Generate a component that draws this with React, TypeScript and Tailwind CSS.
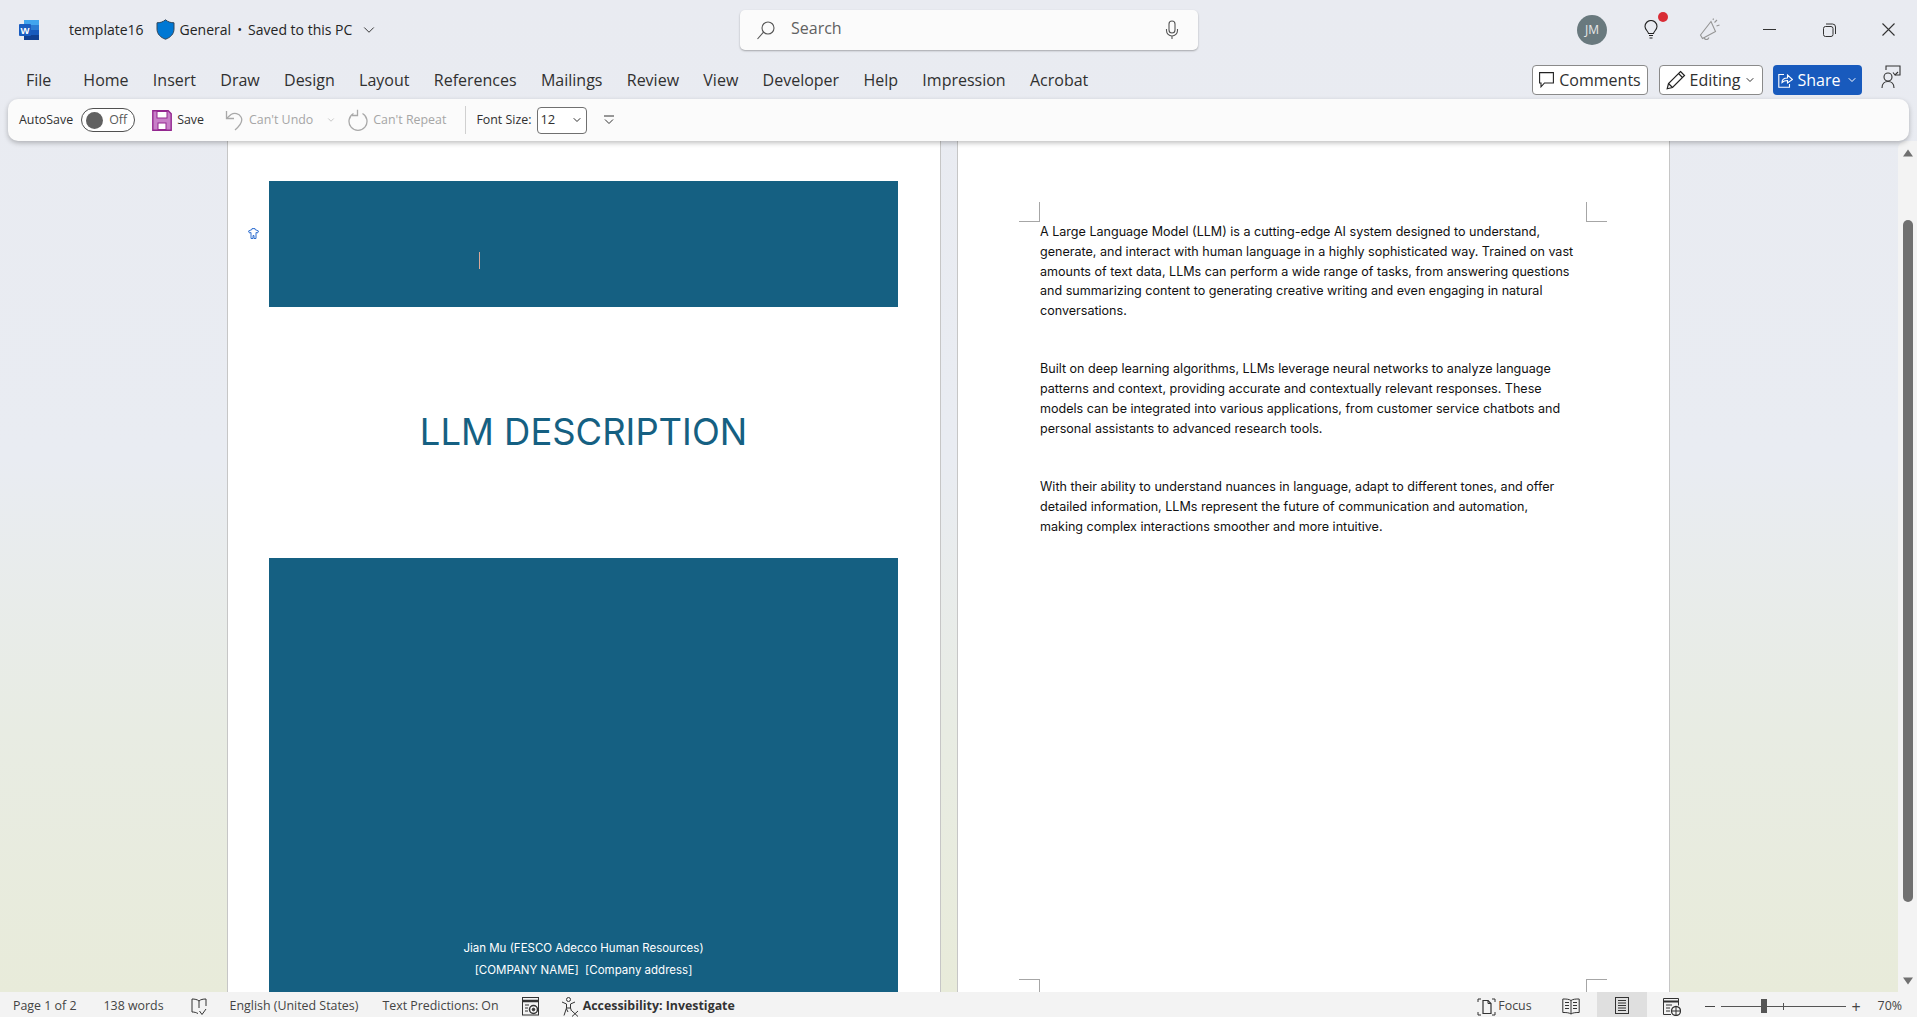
import { ChevronDown } from "lucide-react";

const tabs = ["Home", "Insert", "Draw", "Design", "Layout", "References", "Mailings", "Review", "View", "Developer", "Help", "Impression", "Acrobat"];

const paragraphs = [
  [
    "A Large Language Model (LLM) is a cutting-edge AI system designed to understand,",
    "generate, and interact with human language in a highly sophisticated way. Trained on vast",
    "amounts of text data, LLMs can perform a wide range of tasks, from answering questions",
    "and summarizing content to generating creative writing and even engaging in natural",
    "conversations.",
  ],
  [
    "Built on deep learning algorithms, LLMs leverage neural networks to analyze language",
    "patterns and context, providing accurate and contextually relevant responses. These",
    "models can be integrated into various applications, from customer service chatbots and",
    "personal assistants to advanced research tools.",
  ],
  [
    "With their ability to understand nuances in language, adapt to different tones, and offer",
    "detailed information, LLMs represent the future of communication and automation,",
    "making complex interactions smoother and more intuitive.",
  ],
];

function WordLogo() {
  return (
    <svg width="20" height="20" viewBox="0 0 20 20">
      <rect x="5" y="0" width="15" height="20" rx="1" fill="#2b7cd3" />
      <rect x="5" y="0" width="15" height="5" fill="#41a5ee" />
      <rect x="5" y="10" width="15" height="5" fill="#185abd" />
      <rect x="5" y="15" width="15" height="5" fill="#103f91" />
      <rect x="0" y="4" width="12" height="12" rx="1" fill="#1a5dc0" />
      <text x="6" y="13.5" textAnchor="middle" fontSize="9.5" fontWeight="700" fill="#fff" fontFamily="Liberation Sans, sans-serif">W</text>
    </svg>
  );
}

function Shield() {
  return (
    <svg width="19" height="21" viewBox="0 0 19 21">
      <path d="M9.5 0.8C7 3 4 3.8 1 3.8V10c0 5 3.5 8.5 8.5 10.2C14.500 18.500 18 15 18 10V3.800C15 3.800 12 3 9.500 0.800Z" fill="#0078d4" stroke="#33475b" strokeWidth="1" />
    </svg>
  );
}

function Lens() {
  return (
    <svg width="20" height="20" viewBox="0 0 20 20" fill="none" stroke="#555" strokeWidth="1.1">
      <circle cx="12" cy="8" r="6" />
      <path d="M7.500 12.200 1.500 19" />
    </svg>
  );
}

function Mic() {
  return (
    <svg width="14" height="20" viewBox="0 0 14 20" fill="none" stroke="#555" strokeWidth="1.1">
      <rect x="4" y="1" width="6" height="12" rx="3" />
      <path d="M1.500 9v1.500a5.500 5.500 0 0 0 11 0V9M7 16v3" />
    </svg>
  );
}

function Bulb() {
  return (
    <svg width="14" height="20" viewBox="0 0 14 20" fill="none" stroke="#222" strokeWidth="1.100">
      <path d="M4.500 13.500C4.200 11 1 10 1 6.500a6 6 0 0 1 12 0c0 3.500-3.200 4.500-3.500 7Z" />
      <path d="M5 15.500h4M5.500 18h3" />
    </svg>
  );
}

function Megaphone() {
  return (
    <svg width="22" height="24" viewBox="0 0 22 24" fill="none" stroke="#959595" strokeWidth="1.100">
      <path d="M1.500 17 12 3.500l4.500 10L3.500 20.500Z" />
      <path d="M5 19.500c.5 2 2.500 2.500 4 1.500l1-1.500" />
      <path d="M15.500 4.500 18 2M17.500 8l3-1M14 2l.5-1.500" />
    </svg>
  );
}

function Comment() {
  return (
    <svg width="15" height="16" viewBox="0 0 15 16" fill="none" stroke="#222" strokeWidth="1.100">
      <path d="M.6 .6h13.800v10.400H5.500L2 14.800V11H.6Z" />
    </svg>
  );
}

function Pencil() {
  return (
    <svg width="20" height="20" viewBox="0 0 20 20" fill="none" stroke="#222" strokeWidth="1.200">
      <path d="M14.500 1.500 18.500 5.500 6.500 17.500 1.200 18.800 2.500 13.500Z" />
      <path d="M12.500 3.500l4 4M2.500 13.500l4 4" />
    </svg>
  );
}

function ShareIcon() {
  return (
    <svg width="15" height="16" viewBox="0 0 15 16" fill="none" stroke="#fff" strokeWidth="1.100">
      <path d="M4 10.500C4 7.500 6 6 9.500 6V3l5 4.500-5 3.500V8.500C7 8.500 5.500 9 4 10.500Z" />
      <path d="M6 2.500H.8v12.800h10.700V12" />
    </svg>
  );
}

function Present() {
  return (
    <svg width="20" height="24" viewBox="0 0 20 24" fill="none" stroke="#333" strokeWidth="1.100">
      <path d="M5 5V1h14v9h-5" />
      <path d="M12 7.500l2 2.500 3-3" />
      <circle cx="7" cy="12" r="4" />
      <path d="M1 23c0-4 2.500-6.500 6-6.500s6 2.500 6 6.500" />
    </svg>
  );
}

function SaveIcon() {
  return (
    <svg width="20" height="21" viewBox="0 0 20 21">
      <path d="M.8 .8h15.400L19.200 3.800V20.200H.8Z" fill="#c880c8" stroke="#93278f" strokeWidth="1.400" />
      <rect x="5" y="1.500" width="10" height="6.500" fill="#fff" stroke="#93278f" />
      <rect x="6" y="13" width="8" height="6.500" fill="#fff" stroke="#93278f" />
    </svg>
  );
}

function UndoIcon() {
  return (
    <svg width="19" height="22" viewBox="0 0 19 22" fill="none" stroke="#a9a9a9" strokeWidth="1.300">
      <path d="M1.500 2v7.500H9" />
      <path d="M1.500 9.500 6 5.500c3.500-2 8-1 10 2.500 2 3.500.5 7.500-6 13" />
    </svg>
  );
}

function RedoIcon() {
  return (
    <svg width="20" height="23" viewBox="0 0 20 23" fill="none" stroke="#a9a9a9" strokeWidth="1.300">
      <path d="M5.500 4.500a9 9 0 1 0 9 0" />
      <path d="M9.500 .8v5.700H4" />
    </svg>
  );
}

function OverflowIcon() {
  return (
    <svg width="10" height="10" viewBox="0 0 10 10" fill="none" stroke="#333" strokeWidth="1">
      <path d="M0 1h10M1 4.500 5 8.500l4-4" />
    </svg>
  );
}

function BookCheck() {
  return (
    <svg width="16" height="18" viewBox="0 0 16 18" fill="none" stroke="#333" strokeWidth="1">
      <path d="M8 3C6.500 1.500 3.500 1 1 1v13c2.500 0 4 .5 6 1.500M8 3c1.500-1.500 4-2 7-2v7M8 3v7" />
      <path d="M8.500 13l2.500 3.500 4-5.500" />
    </svg>
  );
}

function MacroIcon() {
  return (
    <svg width="18" height="19" viewBox="0 0 18 19" fill="none" stroke="#333" strokeWidth="1">
      <rect x=".5" y=".5" width="16" height="17.500" />
      <path d="M.5 4h16" strokeWidth="2.500" />
      <path d="M3 8h4M3 11h3M3 14h3" />
      <circle cx="11.500" cy="12.500" r="4" strokeWidth="1.500" />
      <circle cx="11.500" cy="12.500" r="1.300" fill="#333" />
    </svg>
  );
}

function AccessIcon() {
  return (
    <svg width="18" height="20" viewBox="0 0 18 20" fill="none" stroke="#333" strokeWidth="1">
      <circle cx="7.500" cy="2.500" r="2" />
      <path d="M1 5l4.500 2v4L3 18.500M14 5 9.500 7v4l1 3M5.500 11h4M5.500 12 7 15" />
      <path d="M11 14l6 5.500M17 14l-6 5.500" />
    </svg>
  );
}

function FocusIcon() {
  return (
    <svg width="19" height="18" viewBox="0 0 19 18" fill="none" stroke="#333" strokeWidth="1">
      <path d="M1 4V1h3M15 1h3v3M1 14v3h3M15 17h3v-3" />
      <path d="M6 15.500V2.500h5l3 3v10Z" strokeWidth="1.200" />
      <path d="M11 2.500v3h3" />
    </svg>
  );
}

function ReadIcon() {
  return (
    <svg width="18" height="17" viewBox="0 0 18 17" fill="none" stroke="#333" strokeWidth="1">
      <path d="M9 2.500C7 1 4 1 .8 1v13.500c3.200 0 6 0 8.200 1.500 2.200-1.500 5-1.500 8.200-1.500V1C14 1 11 1 9 2.500V16" />
      <path d="M3 4.500h4M3 7.500h4M3 10.500h4M11 4.500h4M11 7.500h4M11 10.500h4" />
    </svg>
  );
}

function PrintIcon() {
  return (
    <svg width="14" height="17" viewBox="0 0 14 17" fill="none" stroke="#333" strokeWidth="1">
      <rect x=".5" y=".5" width="13" height="16" />
      <path d="M3 3.500h8M3 6h8M3 8.500h8M3 11h8M3 13.500h8" />
    </svg>
  );
}

function WebIcon() {
  return (
    <svg width="18" height="18" viewBox="0 0 18 18" fill="none" stroke="#333" strokeWidth="1">
      <path d="M8 16.500H.5V.5h15v7" />
      <path d="M.5 3.500h15" strokeWidth="2" />
      <path d="M3 7h6M3 10h4M3 13h4" />
      <circle cx="13" cy="13" r="4.500" fill="#f3f3f3" strokeWidth="1.300" />
      <path d="M8.500 13h9M13 8.500v9" />
    </svg>
  );
}

function AnchorMark() {
  return (
    <svg width="11" height="11" viewBox="0 0 11 11" fill="none" stroke="#2f6fd0" strokeWidth="1">
      <path d="M.5 3 4 1.500V.6h3v.9L10.500 3 9.500 5 8 4.500v6H6V7.500H5v3H3v-6L1.500 5Z" />
    </svg>
  );
}

function Triangle({ down }: { down?: boolean }) {
  return (
    <svg width="10" height="8" viewBox="0 0 10 8" fill="#707070">
      <path d={down ? "M0 .5h10L5 7.500Z" : "M0 7.500h10L5 .5Z"} />
    </svg>
  );
}

function CropMark({ className }: { className: string }) {
  return <div className={`absolute h-[20px] w-[21px] border-[#a6a6a6] ${className}`} />;
}

function TitleBar() {
  return (
    <div className="flex h-[60px] shrink-0 items-center pb-[1px]">
      <div className="flex w-[740px] items-center text-[14px] text-[#242424]">
        <div className="ml-[19px] mr-[30px]"><WordLogo /></div>
        <span>template16</span>
        <div className="ml-[12px] mr-[5px]"><Shield /></div>
        <span>General</span>
        <span className="w-[17px] text-center text-[13px]">•</span>
        <span>Saved to this PC</span>
        <ChevronDown className="ml-[8px] h-[18px] w-[18px]" strokeWidth={1.2} />
      </div>
      <div className="flex h-[40px] w-[458px] items-center rounded-[5px] bg-[#fbfbfb] pl-[16px] pr-[19px] shadow-[0_1px_2px_rgba(0,0,0,0.3)]">
        <Lens />
        <span className="mb-[4px] ml-[15px] flex-1 text-[16px] text-[#616161]">Search</span>
        <Mic />
      </div>
      <div className="flex flex-1 items-center justify-end">
        <div className="flex w-[58px] justify-center">
          <div className="flex h-[30px] w-[30px] items-center justify-center rounded-full bg-[#69797e] text-[12px] text-[#e8e8e8]">JM</div>
        </div>
        <div className="relative flex w-[60px] justify-center">
          <Bulb />
          <div className="absolute left-[37px] top-[-8px] h-[10px] w-[10px] rounded-full bg-[#d92c35]" />
        </div>
        <div className="flex w-[58px] justify-center"><Megaphone /></div>
        <div className="flex w-[60px] justify-center">
          <div className="h-[1px] w-[13px] bg-[#333]" />
        </div>
        <div className="flex w-[60px] justify-center">
          <svg width="13" height="14" viewBox="0 0 13 14" fill="none" stroke="#333" strokeWidth="1">
            <rect x=".5" y="3.500" width="9.500" height="10" rx="2" />
            <path d="M3 1h6.500A3 3 0 0 1 12.500 4v7" />
          </svg>
        </div>
        <div className="flex w-[58px] justify-center">
          <svg width="13" height="13" viewBox="0 0 13 13" fill="none" stroke="#333" strokeWidth="1.100">
            <path d="M.5 .5l12 12M12.500 .5l-12 12" />
          </svg>
        </div>
      </div>
    </div>
  );
}

function TabRow() {
  return (
    <div className="flex h-[39px] shrink-0 items-center pl-[26px] text-[16px] text-[#303030]">
      <span className="mr-[32px] mt-[1px]">File</span>
      <div className="mt-[1px] flex gap-[24.300px]">
        {tabs.map((t) => (
          <span key={t}>{t}</span>
        ))}
      </div>
      <div className="ml-auto flex items-center pr-[55px]">
        <div className="flex h-[30px] w-[116px] items-center justify-center gap-[5px] rounded-[4px] border border-[#8a8a8a] bg-white">
          <Comment />
          <span>Comments</span>
        </div>
        <div className="ml-[11px] flex h-[30px] w-[104px] items-center justify-center gap-[4px] rounded-[4px] border border-[#8a8a8a] bg-white">
          <Pencil />
          <span>Editing</span>
          <ChevronDown className="h-[12px] w-[12px]" strokeWidth={2} />
        </div>
        <div className="ml-[10px] flex h-[30px] w-[89px] items-center justify-center gap-[5px] rounded-[4px] bg-[#185abd] text-white">
          <ShareIcon />
          <span>Share</span>
          <ChevronDown className="h-[12px] w-[12px]" strokeWidth={2} />
        </div>
      </div>
      <div className="absolute right-[16px] top-[65px]"><Present /></div>
    </div>
  );
}

function Toolbar() {
  return (
    <div className="relative z-10 mx-[8px] flex h-[42px] shrink-0 items-center rounded-[10px] bg-[#fbfbfb] pl-[11px] text-[12.400px] text-[#303030] shadow-[0_2px_5px_rgba(0,0,0,0.25)]">
      <span>AutoSave</span>
      <div className="ml-[8px] flex h-[24px] w-[54px] items-center rounded-full border border-[#505050] bg-white pl-[4px]">
        <div className="h-[17px] w-[17px] rounded-full bg-[#616161]" />
        <span className="ml-[6px] text-[#5a5a5a]">Off</span>
      </div>
      <div className="ml-[17px]"><SaveIcon /></div>
      <span className="ml-[5px]">Save</span>
      <div className="ml-[21px]"><UndoIcon /></div>
      <span className="ml-[5px] text-[#a6a6a6]">Can't Undo</span>
      <ChevronDown className="ml-[13px] h-[10px] w-[10px] text-[#a6a6a6]" strokeWidth={1.500} />
      <div className="ml-[12px]"><RedoIcon /></div>
      <span className="ml-[5px] text-[#a6a6a6]">Can't Repeat</span>
      <div className="ml-[19px] h-[28px] w-[1px] bg-[#d0d0d0]" />
      <span className="ml-[10px]">Font Size:</span>
      <div className="ml-[6px] flex h-[27px] w-[50px] items-center justify-between rounded-[4px] border border-[#707070] bg-white pl-[2px] pr-[3px] text-[13px]">
        <span>12</span>
        <ChevronDown className="h-[12px] w-[12px]" strokeWidth={2} />
      </div>
      <div className="ml-[17px]"><OverflowIcon /></div>
    </div>
  );
}

function CoverPage() {
  return (
    <div className="relative h-full w-[714px] shrink-0 overflow-hidden border-x border-[#c6c6c6] bg-white pl-[41px] pr-[42px] pt-[40px] font-['Inter',sans-serif]">
      <div className="relative h-[126px] bg-[#156082]">
        <div className="absolute left-[210px] top-[71px] h-[17px] w-[1px] bg-[#d8a898]" />
      </div>
      <div className="absolute left-[20px] top-[87px]"><AnchorMark /></div>
      <div className="flex h-[251px] items-center justify-center pb-[1px] text-[36.400px] leading-none text-[#156082]">LLM DESCRIPTION</div>
      <div className="flex h-[435px] flex-col items-center justify-end bg-[#156082] pb-[12px] text-[11.500px] text-white">
        <div className="h-[22px] leading-[22px]">Jian Mu (FESCO Adecco Human Resources)</div>
        <div className="h-[22px] leading-[22px]">[COMPANY NAME]&nbsp; [Company address]</div>
      </div>
    </div>
  );
}

function TextPage() {
  return (
    <div className="relative h-full w-[713px] shrink-0 overflow-hidden border-x border-[#c6c6c6] bg-white pl-[82px] pt-[81px] font-['Inter',sans-serif] text-[12.550px] leading-[20px] text-[#111]">
      <CropMark className="left-[61px] top-[61px] border-b border-r" />
      <CropMark className="left-[628px] top-[61px] border-b border-l" />
      <CropMark className="left-[61px] bottom-[-7px] border-t border-r" />
      <CropMark className="left-[628px] bottom-[-7px] border-t border-l" />
      <div className="flex flex-col gap-[38px]">
        {paragraphs.map((lines, i) => (
          <p key={i} className="first:leading-[19.750px]">
            {lines.map((line) => (
              <span key={line} className="block whitespace-nowrap">{line}</span>
            ))}
          </p>
        ))}
      </div>
    </div>
  );
}

function Scrollbar() {
  return (
    <div className="flex h-full w-[19px] flex-col items-center justify-between rounded-tl-[8px] bg-[#f3f3f3] pb-[7px] pt-[8px]">
      <Triangle />
      <div className="mb-[75px] mt-[63px] w-[10px] flex-1 rounded-full bg-[#707070]" />
      <Triangle down />
    </div>
  );
}

function StatusBar() {
  return (
    <div className="flex h-[25px] shrink-0 items-center bg-[#f3f3f3] pl-[13px] pt-[4px] text-[12.400px] text-[#444]">
      <span>Page 1 of 2</span>
      <span className="ml-[27px]">138 words</span>
      <div className="ml-[27px]"><BookCheck /></div>
      <span className="ml-[23px]">English (United States)</span>
      <span className="ml-[24px]">Text Predictions: On</span>
      <div className="ml-[23px]"><MacroIcon /></div>
      <div className="ml-[21px]"><AccessIcon /></div>
      <span className="ml-[4px] font-bold text-[#333]">Accessibility: Investigate</span>
      <div className="ml-auto flex h-full items-center">
        <FocusIcon />
        <span className="ml-[2px]">Focus</span>
        <div className="ml-[30px]"><ReadIcon /></div>
        <div className="ml-[17px] mt-[-4px] flex h-[25px] w-[50px] items-center justify-center bg-[#dfdfdf] pt-[2px]"><PrintIcon /></div>
        <div className="ml-[16px]"><WebIcon /></div>
        <div className="ml-[24px] h-[1px] w-[10px] bg-[#444]" />
        <div className="relative ml-[6px] h-[1px] w-[125px] bg-[#555]">
          <div className="absolute left-[40px] top-[-7px] h-[14px] w-[6px] bg-[#555]" />
          <div className="absolute left-[62px] top-[-3px] h-[7px] w-[1px] bg-[#555]" />
        </div>
        <span className="ml-[6px] w-[12px] text-[16px] leading-none">+</span>
        <span className="ml-[14px] mr-[15px]">70%</span>
      </div>
    </div>
  );
}

export default function App() {
  return (
    <div className="relative flex h-screen w-full flex-col overflow-hidden bg-[linear-gradient(180deg,#e9ebf1_0%,#e9ecf2_45%,#e8ece3_72%,#e8ebd9_100%)] font-['Open_Sans',sans-serif]">
      <TitleBar />
      <TabRow />
      <Toolbar />
      <div className="flex min-h-0 flex-1">
        <div className="flex min-w-0 flex-1 gap-[16px] pl-[227px]">
          <CoverPage />
          <TextPage />
        </div>
        <Scrollbar />
      </div>
      <StatusBar />
    </div>
  );
}
